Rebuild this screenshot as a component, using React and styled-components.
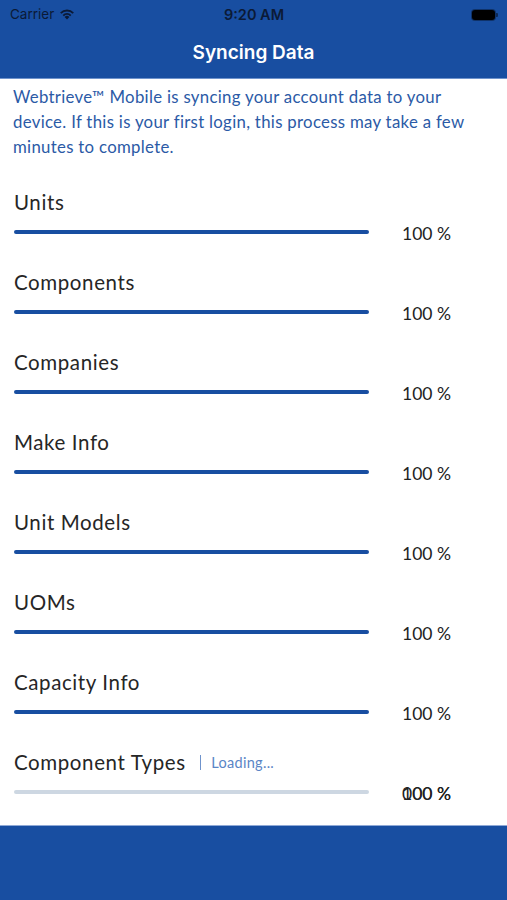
import React from "react";
import styled, { createGlobalStyle } from "styled-components";

const GlobalStyle = createGlobalStyle`
  html, body {
    margin: 0;
    padding: 0;
    background: #ffffff;
  }
  body {
    font-family: "Lato", "Noto Sans", sans-serif;
  }
`;

const BLUE = "#184ea1";

const items = [
  { name: "Units", value: "100 %" },
  { name: "Components", value: "100 %" },
  { name: "Companies", value: "100 %" },
  { name: "Make Info", value: "100 %" },
  { name: "Unit Models", value: "100 %" },
  { name: "UOMs", value: "100 %" },
  { name: "Capacity Info", value: "100 %" },
  { name: "Component Types", value: ["100 %", "000 %"], loading: true },
];

const Screen = styled.div`
  width: 507px;
  height: 900px;
  display: flex;
  flex-direction: column;
  overflow: hidden;
`;

const Header = styled.header`
  background: ${BLUE};
  height: 78px;
  display: flex;
  flex-direction: column;
  border-bottom: 1px solid #6f93cc;
`;

const StatusBar = styled.div`
  height: 28px;
  display: grid;
  grid-template-columns: 1fr auto 1fr;
  align-items: center;
  padding: 0 9px 0 10px;
  color: #0b1a36;
  font-family: "Inter", "Liberation Sans", sans-serif;
`;

const Carrier = styled.div`
  display: flex;
  align-items: center;
  gap: 5px;
  font-size: 13.5px;
`;

const Clock = styled.div`
  font-size: 14.5px;
  font-weight: 600;
`;

const Battery = styled.div`
  justify-self: end;
  display: flex;
  align-items: center;
  gap: 1px;
  margin-top: 1px;
`;

const BatteryBody = styled.span`
  width: 23px;
  height: 10px;
  border-radius: 3px;
  background: #000;
  box-shadow: 0 0 0 1px rgba(0, 0, 0, 0.35);
`;

const BatteryNub = styled.span`
  width: 2px;
  height: 4px;
  border-radius: 0 1px 1px 0;
  background: rgba(0, 0, 0, 0.45);
`;

const Title = styled.h1`
  margin: 0;
  flex: 1;
  display: flex;
  align-items: center;
  justify-content: center;
  color: #fff;
  font-family: "Inter", "Liberation Sans", sans-serif;
  font-size: 19px;
  font-weight: 600;
  padding-bottom: 2px;
`;

const Body = styled.main`
  flex: 1;
  overflow: hidden;
  padding: 5px 14px 0 14px;
`;

const Intro = styled.p`
  margin: 0 0 30px -1px;
  max-width: 460px;
  color: #2b5aa6;
  font-size: 16.8px;
  letter-spacing: 0.3px;
  line-height: 25px;
`;

const Row = styled.div`
  display: flex;
  flex-direction: column;
  gap: 5px;
  padding-bottom: 25px;
`;

const Label = styled.div`
  display: flex;
  align-items: center;
  gap: 10px;
  height: 26px;
  color: #262626;
  font-size: 20.5px;
  letter-spacing: 0.6px;
`;

const Divider = styled.span`
  width: 1.5px;
  height: 15px;
  background: #6f93cc;
  margin-left: 4px;
`;

const Loading = styled.span`
  color: #5a85c6;
  font-size: 14.5px;
  letter-spacing: 0.3px;
  margin-top: 1px;
`;

const BarRow = styled.div`
  display: flex;
  align-items: center;
  height: 24px;
`;

const Track = styled.div`
  width: 355px;
  height: 4px;
  border-radius: 2px;
  background: ${({ $done }) => ($done ? BLUE : "#cdd7e2")};
`;

const Percent = styled.div`
  margin-left: 33px;
  display: grid;
  color: #222;
  font-size: 17.5px;
  margin-top: 3px;

  & > span {
    grid-area: 1 / 1;
  }
`;

const Footer = styled.footer`
  height: 74px;
  background: ${BLUE};
  border-top: 1px solid #8fa9d6;
`;

const Wifi = () => (
  <svg width="16" height="12" viewBox="0 0 16 12">
    <path d="M8 11.5 L5.6 8.9 A3.4 3.4 0 0 1 10.4 8.9 Z" fill="#0b1a36" />
    <path d="M3.6 6.9 A6.3 6.3 0 0 1 12.4 6.9 L11.1 8.2 A4.5 4.5 0 0 0 4.9 8.2 Z" fill="#0b1a36" />
    <path d="M1.1 4.4 A9.8 9.8 0 0 1 14.9 4.4 L13.6 5.7 A8 8 0 0 0 2.4 5.7 Z" fill="#0b1a36" />
  </svg>
);

const SyncRow = ({ item }) => {
  const values = Array.isArray(item.value) ? item.value : [item.value];
  return (
    <Row>
      <Label>
        {item.name}
        {item.loading && (
          <>
            <Divider />
            <Loading>Loading...</Loading>
          </>
        )}
      </Label>
      <BarRow>
        <Track $done={!item.loading} />
        <Percent>
          {values.map((v, i) => (
            <span key={i}>{v}</span>
          ))}
        </Percent>
      </BarRow>
    </Row>
  );
};

const App = () => (
  <Screen>
    <GlobalStyle />
    <Header>
      <StatusBar>
        <Carrier>
          Carrier <Wifi />
        </Carrier>
        <Clock>9:20 AM</Clock>
        <Battery>
          <BatteryBody />
          <BatteryNub />
        </Battery>
      </StatusBar>
      <Title>Syncing Data</Title>
    </Header>
    <Body>
      <Intro>
        Webtrieve™ Mobile is syncing your account data to your device. If this
        is your first login, this process may take a few minutes to complete.
      </Intro>
      {items.map((item) => (
        <SyncRow key={item.name} item={item} />
      ))}
    </Body>
    <Footer />
  </Screen>
);

export default App;
